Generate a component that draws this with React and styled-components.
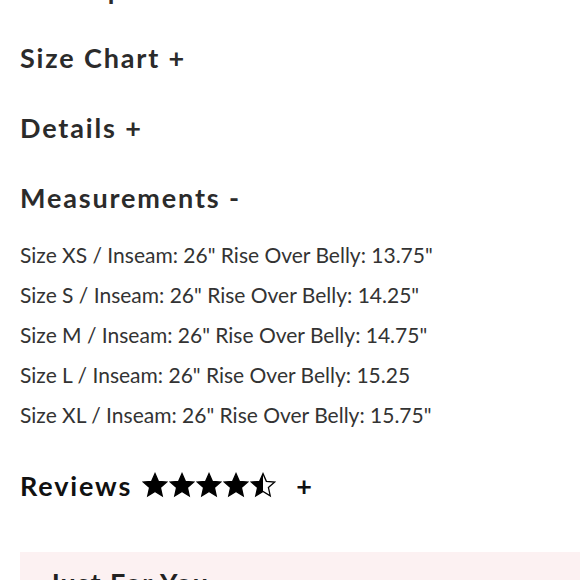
import React from 'react'
import styled, { createGlobalStyle } from 'styled-components'

const GlobalStyle = createGlobalStyle`
  html, body {
    margin: 0;
    padding: 0;
    background: #fff;
    overflow: hidden;
  }
  body {
    font-family: Lato, "Noto Sans", sans-serif;
    color: #2b2b2b;
  }
`

const Page = styled.div`
  width: 580px;
  height: 580px;
  overflow: hidden;
`

const Content = styled.div`
  margin-top: -45px;
  padding-left: 20px;
`

const Heading = styled.div`
  height: 70px;
  box-sizing: border-box;
  padding-bottom: ${p => p.$lift}px;
  display: flex;
  align-items: center;
  font-size: 27px;
  font-weight: 700;
  letter-spacing: 1.85px;
  color: ${p => p.$dark ? '#111' : '#2b2b2b'};
`

const Lines = styled.div`
  margin-bottom: 15px;
`

const Line = styled.div`
  height: 40px;
  line-height: 40px;
  font-size: 21px;
  color: #333;
`

const Stars = styled.div`
  display: flex;
  gap: 1px;
  margin: 0 20px 0 10px;
`

const Plus = styled.span``

const Banner = styled.div`
  margin: 32px 0 0 20px;
  background: #fcf1f2;
  padding: 14px 28px;
  height: 200px;
`

const BannerTitle = styled.div`
  font-size: 27px;
  font-weight: 700;
  letter-spacing: 1.4px;
  color: #222;
`

const STAR = '12,1.5 15.1,8.6 22.8,9.3 17,14.4 18.7,22 12,18 5.3,22 7,14.4 1.2,9.3 8.9,8.6'

const Star = ({ half }) => (
  <svg width="26" height="26" viewBox="0 0 24 24">
    {half && (
      <defs>
        <linearGradient id="half">
          <stop offset="50%" stopColor="#000" />
          <stop offset="50%" stopColor="#fff" />
        </linearGradient>
      </defs>
    )}
    <polygon
      points={STAR}
      fill={half ? 'url(#half)' : '#000'}
      stroke="#000"
      strokeWidth="1.2"
      strokeLinejoin="miter"
    />
  </svg>
)

const sizes = [
  'Size XS / Inseam: 26" Rise Over Belly: 13.75"',
  'Size S / Inseam: 26" Rise Over Belly: 14.25"',
  'Size M / Inseam: 26" Rise Over Belly: 14.75"',
  'Size L / Inseam: 26" Rise Over Belly: 15.25',
  'Size XL / Inseam: 26" Rise Over Belly: 15.75"',
]

export default function App() {
  return (
    <Page>
      <GlobalStyle />
      <Content>
        <Heading $lift={1}>Description +</Heading>
        <Heading $lift={5}>Size Chart +</Heading>
        <Heading $lift={5}>Details +</Heading>
        <Heading $lift={6}>Measurements -</Heading>
        <Lines>
          {sizes.map(s => <Line key={s}>{s}</Line>)}
        </Lines>
        <Heading $dark $lift={0}>
          Reviews
          <Stars>
            <Star /><Star /><Star /><Star /><Star half />
          </Stars>
          <Plus>+</Plus>
        </Heading>
      </Content>
      <Banner>
        <BannerTitle>Just For You</BannerTitle>
      </Banner>
    </Page>
  )
}
